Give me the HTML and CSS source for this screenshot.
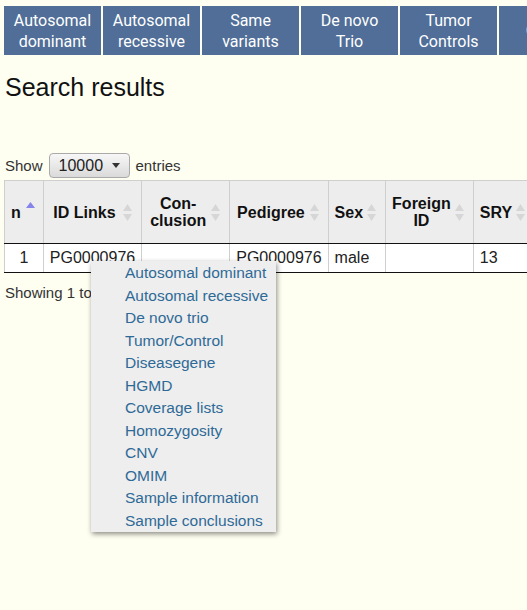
FILE: index.html
```html
<!DOCTYPE html>
<html>
<head>
<meta charset="utf-8">
<title>Search results</title>
<link rel="stylesheet" href="styles.css">
</head>
<body>
<nav class="nav">
  <a class="nav-btn" href="#">Autosomal<br>dominant</a>
  <a class="nav-btn" href="#">Autosomal<br>recessive</a>
  <a class="nav-btn" href="#">Same<br>variants</a>
  <a class="nav-btn" href="#">De novo<br>Trio</a>
  <a class="nav-btn" href="#">Tumor<br>Controls</a>
  <a class="nav-btn" href="#">OMIM</a>
</nav>

<h1 class="title">Search results</h1>

<div class="length">
  <span>Show</span>
  <span class="select"><span class="select-val">10000</span><span class="caret"></span></span>
  <span>entries</span>
</div>

<div class="table-wrap">
  <table class="results">
    <thead>
      <tr>
        <th class="sort-asc col-n">n</th>
        <th class="sort">ID Links</th>
        <th class="sort col-con">Con-<br>clusion</th>
        <th class="sort">Pedigree</th>
        <th class="sort">Sex</th>
        <th class="sort">Foreign<br>ID</th>
        <th class="sort">SRY</th>
      </tr>
    </thead>
    <tbody>
      <tr>
        <td class="num">1</td>
        <td>PG0000976</td>
        <td></td>
        <td>PG0000976</td>
        <td>male</td>
        <td></td>
        <td>13</td>
      </tr>
    </tbody>
  </table>
  <ul class="menu">
    <li><a href="#">Autosomal dominant</a></li>
    <li><a href="#">Autosomal recessive</a></li>
    <li><a href="#">De novo trio</a></li>
    <li><a href="#">Tumor/Control</a></li>
    <li><a href="#">Diseasegene</a></li>
    <li><a href="#">HGMD</a></li>
    <li><a href="#">Coverage lists</a></li>
    <li><a href="#">Homozygosity</a></li>
    <li><a href="#">CNV</a></li>
    <li><a href="#">OMIM</a></li>
    <li><a href="#">Sample information</a></li>
    <li><a href="#">Sample conclusions</a></li>
  </ul>
</div>

<div class="info">Showing 1 to 1 of 1 entries</div>
</body>
</html>
```

FILE: styles.css
```css
html, body {
  margin: 0;
  padding: 0;
  overflow: hidden;
}
body {
  background: #fefef1;
  font-family: "Liberation Sans", Arial, sans-serif;
  color: #111;
  width: 527px;
  height: 610px;
}

.nav {
  display: flex;
  gap: 2px;
  margin: 6px 0 0 4px;
}
.nav-btn {
  flex: 0 0 97px;
  height: 49px;
  background: #506e97;
  color: #fff;
  font: 16px/21px Roboto, sans-serif;
  display: flex;
  align-items: center;
  justify-content: center;
  text-align: center;
  text-decoration: none;
}

.title {
  margin: 18px 0 0 5px;
  font-size: 25px;
  font-weight: normal;
  line-height: 29px;
  color: #111;
}

.length {
  display: flex;
  align-items: center;
  gap: 6px;
  margin: 51px 0 0 5px;
  font-size: 15px;
  color: #333;
}
.select {
  display: flex;
  align-items: center;
  box-sizing: border-box;
  width: 81px;
  height: 25px;
  padding: 0 0 0 9px;
  border: 1px solid #aaa;
  border-radius: 4px;
  background: linear-gradient(#f7f7f7, #dadada);
  font-size: 16px;
  color: #222;
}
.select-val {
  flex: 0 0 auto;
}
.caret {
  width: 0;
  height: 0;
  margin-left: 9px;
  border-left: 4px solid transparent;
  border-right: 4px solid transparent;
  border-top: 5px solid #333;
}

.table-wrap {
  position: relative;
  margin: 2px 0 0 4px;
}
.results {
  border-collapse: collapse;
  white-space: nowrap;
}
.results th {
  background-color: #ededed;
  border: 1px solid #cfcfcf;
  border-bottom: 1px solid #111;
  font-size: 16px;
  line-height: 17px;
  font-weight: bold;
  text-align: center;
  padding: 14px 22px 14px 6px;
  color: #111;
  background-repeat: no-repeat;
  background-position: right 9px center;
}
.results th.col-n {
  padding-left: 6px;
  padding-right: 22px;
}
.results th.col-con {
  padding-left: 8px;
  padding-right: 23px;
}
.results th.sort {
  background-image: url("data:image/svg+xml,%3Csvg xmlns='http://www.w3.org/2000/svg' width='9' height='17' viewBox='0 0 9 17'%3E%3Cpolygon points='0,7 4.5,0 9,7' fill='%23d6d6d6'/%3E%3Cpolygon points='0,10 9,10 4.5,17' fill='%23d6d6d6'/%3E%3C/svg%3E");
}
.results th.sort-asc {
  background-image: url("data:image/svg+xml,%3Csvg xmlns='http://www.w3.org/2000/svg' width='9' height='17' viewBox='0 0 9 17'%3E%3Cpolygon points='0,6 4.5,0 9,6' fill='%238484ea'/%3E%3C/svg%3E");
  background-position: right 8px top 21px;
}
.results td {
  background: #fff;
  border-left: 1px solid #cfcfcf;
  border-right: 1px solid #cfcfcf;
  border-bottom: 1px solid #111;
  font-size: 16px;
  line-height: 18px;
  padding: 5px 6px;
  color: #222;
}
.results td.num {
  text-align: center;
}

.menu {
  position: absolute;
  left: 87px;
  top: 81px;
  width: 185px;
  margin: 0;
  padding: 1px 0 0 34px;
  box-sizing: border-box;
  height: 271px;
  list-style: none;
  background: #eeeeee;
  box-shadow: 1px 2px 5px rgba(0, 0, 0, 0.45);
}
.menu li {
  font-size: 15.5px;
  line-height: 22.5px;
}
.menu a {
  color: #2e6a97;
  text-decoration: none;
}

.info {
  margin: 11px 0 0 5px;
  font-size: 15px;
  line-height: 17px;
  color: #333;
}
```
